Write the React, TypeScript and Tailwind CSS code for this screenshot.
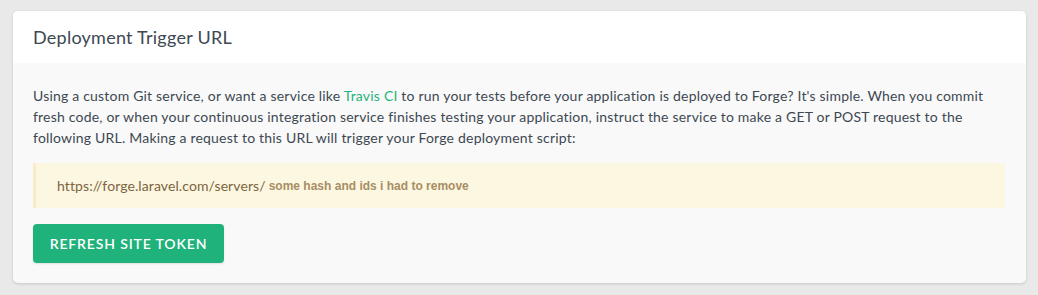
export default function App() {
  return (
    <div className="min-h-[295px] bg-[#e9e9e9] pt-[11px] px-[12px] pb-[12px] font-['Lato','Noto_Sans',sans-serif]">
      <div className="w-[1013px] ml-[1px] overflow-hidden rounded-[5px] bg-[#f9f9f9] shadow-[0_1px_3px_rgba(0,0,0,0.15)]">
        <div className="flex h-[52px] items-center bg-white px-5">
          <h2 className="text-[18px] tracking-[0.25px] text-[#3d4852]">Deployment Trigger URL</h2>
        </div>
        <div className="px-5 pt-[22px] pb-[20px]">
          <p className="text-[14px] leading-[21px] tracking-[0.2px] text-[#3d4852]">
            Using a custom Git service, or want a service like{" "}
            <a className="text-[#1fb27a]">Travis CI</a> to run your tests before your
            application is deployed to Forge? It's simple. When you commit fresh code, or
            when your continuous integration service finishes testing your application,
            instruct the service to make a GET or POST request to the following URL. Making a
            request to this URL will trigger your Forge deployment script:
          </p>
          <div className="mt-[15px] flex h-[45px] w-[972px] items-center border-l-[3px] border-[#faebc8] bg-[#fcf7e1] pl-[21px]">
            <span className="text-[14px] tracking-[0.1px] text-[#7d6440]">
              https://forge.laravel.com/servers/
            </span>
            <span className="ml-[3px] font-['Liberation_Sans',sans-serif] text-[12px] font-bold text-[#a88d63]">
              some hash and ids i had to remove
            </span>
          </div>
          <button className="mt-[16px] h-[39px] w-[191px] rounded-[4px] bg-[#1fb27a] text-[14px] font-semibold tracking-[0.85px] text-white shadow-[0_1px_2px_rgba(0,0,0,0.1)]">
            REFRESH SITE TOKEN
          </button>
        </div>
      </div>
    </div>
  )
}
